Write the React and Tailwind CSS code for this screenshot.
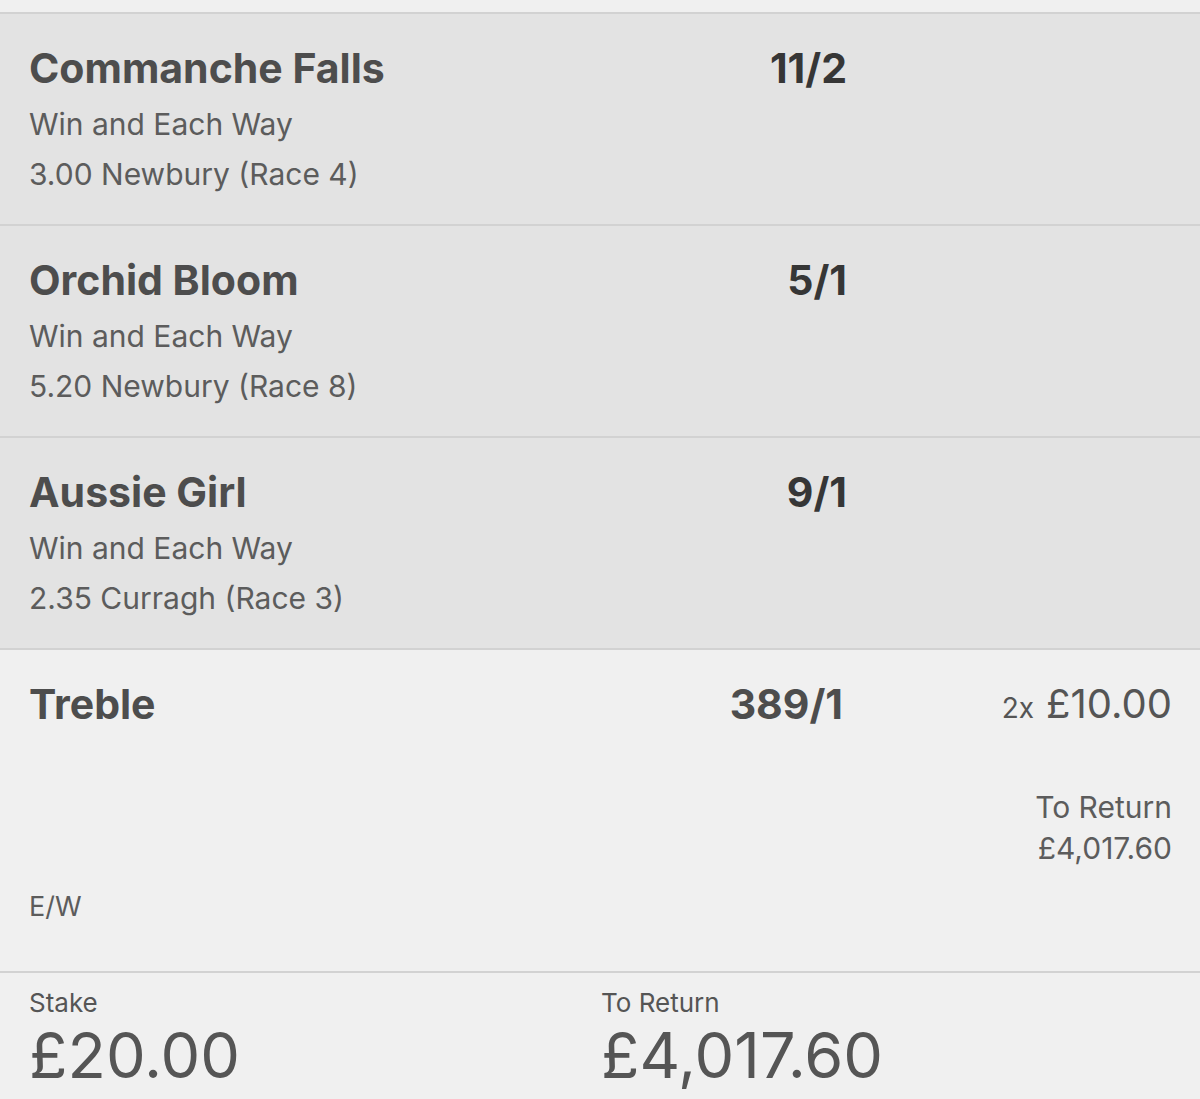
const legs = [
  { name: "Commanche Falls", odds: "11/2", market: "Win and Each Way", race: "3.00 Newbury (Race 4)" },
  { name: "Orchid Bloom", odds: "5/1", market: "Win and Each Way", race: "5.20 Newbury (Race 8)" },
  { name: "Aussie Girl", odds: "9/1", market: "Win and Each Way", race: "2.35 Curragh (Race 3)" },
];

function Leg({ leg }) {
  return (
    <div className="flex bg-[#e3e3e3] border-b-2 border-[#d2d2d2] pl-[29px] pt-[30px] pb-[25px]">
      <div className="w-[618px]">
        <div className="text-[41px] leading-[48px] font-bold text-[#4d4d4d]">{leg.name}</div>
        <div className="mt-[7px] text-[30px] leading-[50px] text-[#5c5c5c]">{leg.market}</div>
        <div className="text-[30px] leading-[50px] text-[#5c5c5c]">{leg.race}</div>
      </div>
      <div className="w-[200px] text-right text-[41px] leading-[48px] font-bold text-[#363636]">
        {leg.odds}
      </div>
    </div>
  );
}

export default function App() {
  return (
    <div className="w-[1200px] h-[1099px] bg-[#f0f0f0] font-['Inter',sans-serif] overflow-hidden">
      <div className="h-[14px] border-b-2 border-[#d2d2d2]" />
      {legs.map((leg) => (
        <Leg key={leg.name} leg={leg} />
      ))}
      <div className="h-[323px] border-b-2 border-[#d2d2d2] pl-[29px] pr-[28px] pt-[30px] flex flex-col">
        <div className="flex">
          <div className="w-[618px] text-[41px] leading-[48px] font-bold text-[#4d4d4d]">Treble</div>
          <div className="w-[196px] text-right text-[41px] leading-[48px] font-bold text-[#4d4d4d]">389/1</div>
          <div className="flex-1 flex justify-end items-baseline text-[#555]">
            <span className="text-[28px] mr-[12px]">2x</span>
            <span className="text-[40px] leading-[48px]">£10.00</span>
          </div>
        </div>
        <div className="mt-[58px] text-right text-[30px] leading-[41px] text-[#5c5c5c]">
          <div>To Return</div>
          <div>£4,017.60</div>
        </div>
        <div className="mt-[18px] text-[27px] text-[#5c5c5c]">E/W</div>
      </div>
      <div className="flex pl-[29px] pt-[14px]">
        <div className="w-[572px]">
          <div className="text-[26px] leading-[32px] text-[#555]">Stake</div>
          <div className="text-[63px] leading-[72px] text-[#555]">£20.00</div>
        </div>
        <div>
          <div className="text-[26px] leading-[32px] text-[#555]">To Return</div>
          <div className="text-[63px] leading-[72px] text-[#555]">£4,017.60</div>
        </div>
      </div>
    </div>
  );
}
